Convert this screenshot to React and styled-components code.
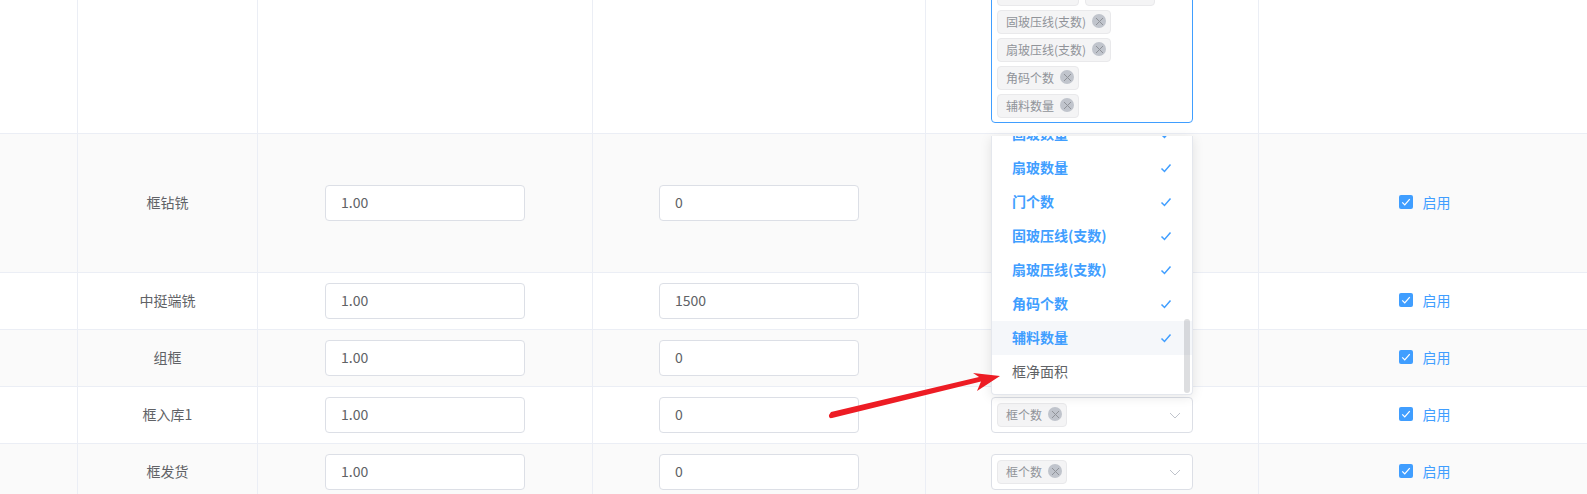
import styled, { createGlobalStyle } from "styled-components";

const GlobalStyle = createGlobalStyle`
  html, body {
    margin: 0;
    height: 100%;
    overflow: hidden;
    background: #fff;
  }
  body {
    font-family: "Noto Sans CJK SC", "Noto Sans", sans-serif;
    font-size: 14px;
    color: #606266;
  }
`;

const Page = styled.div`
  position: relative;
  width: 1587px;
  height: 494px;
  overflow: hidden;
`;

const Table = styled.div`
  margin-top: -63px;
`;

const Row = styled.div`
  display: grid;
  grid-template-columns: 78px 180px 335px 333px 333px 1fr;
  height: ${(p) => p.$height}px;
  box-sizing: border-box;
  border-bottom: 1px solid #ebeef5;
  background: ${(p) => (p.$striped ? "#fafafa" : "#fff")};
`;

const Cell = styled.div`
  display: flex;
  align-items: center;
  justify-content: center;
  min-width: 0;
  border-right: 1px solid #ebeef5;
  &:last-child {
    border-right: 0;
  }
`;

const CellText = styled.span`
  padding-bottom: 2px;
`;

const NumberInput = styled.input`
  width: 200px;
  height: 36px;
  box-sizing: border-box;
  padding: 0 15px 2px;
  border: 1px solid #dcdfe6;
  border-radius: 4px;
  outline: 0;
  background: #fff;
  font: inherit;
  color: #606266;
`;

const SelectBox = styled.div`
  display: flex;
  width: 202px;
  min-height: 36px;
  box-sizing: border-box;
  padding: ${(p) => (p.$open ? "6px 5px 4px" : "5px")};
  border: 1px solid ${(p) => (p.$open ? "#409eff" : "#dcdfe6")};
  border-radius: 4px;
  background: #fff;
`;

const Tags = styled.div`
  display: flex;
  flex-wrap: wrap;
  gap: 4px 6px;
  width: 160px;
`;

const Tag = styled.span`
  display: inline-flex;
  align-items: center;
  height: 24px;
  box-sizing: border-box;
  padding: 0 4px 2px 8px;
  border: 1px solid #e9e9eb;
  border-radius: 4px;
  background: #f4f4f5;
  font-size: 12px;
  color: #909399;
  white-space: nowrap;
`;

const TagClose = styled.span`
  display: inline-flex;
  align-items: center;
  justify-content: center;
  width: 14px;
  height: 14px;
  margin-left: 6px;
  border-radius: 50%;
  background: #c0c4cc;
  color: #909399;
`;

const Chevron = styled.span`
  display: flex;
  align-items: center;
  justify-content: center;
  align-self: flex-start;
  width: 24px;
  height: 24px;
  margin-left: 6px;
  color: #c0c4cc;
`;

const Status = styled.label`
  display: inline-flex;
  align-items: center;
  gap: 10px;
  margin-left: 3px;
  padding-bottom: 2px;
  color: #409eff;
`;

const CheckBox = styled.span`
  display: flex;
  align-items: center;
  justify-content: center;
  width: 14px;
  height: 14px;
  border-radius: 2px;
  background: #409eff;
  color: #fff;
`;

const Dropdown = styled.div`
  position: absolute;
  top: 136px;
  left: 991px;
  width: 202px;
  height: 259px;
  box-sizing: border-box;
  border: 1px solid #e4e7ed;
  border-top: 0;
  border-radius: 0 0 4px 4px;
  background: #fff;
  box-shadow: 0 2px 12px rgba(0, 0, 0, 0.1);
  &::before {
    content: "";
    position: absolute;
    top: -5px;
    left: 37px;
    border-style: solid;
    border-width: 0 5px 5px;
    border-color: transparent transparent #fff;
  }
`;

const OptionList = styled.div`
  height: 100%;
  overflow: hidden;
  position: relative;
`;

const Options = styled.ul`
  list-style: none;
  margin: -19px 0 0;
  padding: 0;
`;

const Option = styled.li`
  display: flex;
  align-items: center;
  justify-content: space-between;
  height: 34px;
  padding: 0 20px;
  font-weight: ${(p) => (p.$selected ? 700 : 400)};
  color: ${(p) => (p.$selected ? "#409eff" : "#606266")};
  background: ${(p) => (p.$hover ? "#f5f7fa" : "transparent")};
`;

const ScrollThumb = styled.div`
  position: absolute;
  top: 183px;
  right: 2px;
  width: 6px;
  height: 74px;
  border-radius: 3px;
  background: rgba(144, 147, 153, 0.3);
`;

const Arrow = styled.svg`
  position: absolute;
  top: 360px;
  left: 820px;
  pointer-events: none;
`;

const CloseIcon = () => (
  <svg width="9" height="9" viewBox="0 0 9 9" fill="none" stroke="currentColor" strokeWidth="1">
    <path d="M1 1l7 7M8 1L1 8" />
  </svg>
);

const CheckIcon = ({ size = 12, width = 1.5 }) => (
  <svg width={size} height={size} viewBox="0 0 12 12" fill="none" stroke="currentColor" strokeWidth={width}>
    <path d="M1.5 6.5l3 3 6-7" />
  </svg>
);

const ChevronIcon = () => (
  <svg width="12" height="7" viewBox="0 0 12 7" fill="none" stroke="currentColor" strokeWidth="1">
    <path d="M1 1l5 5 5-5" />
  </svg>
);

const allTags = ["框个数", "固玻数量", "扇玻数量", "门个数", "固玻压线(支数)", "扇玻压线(支数)", "角码个数", "辅料数量"];

// the selects of 框钻铣, 中挺端铣 and 组框 sit under the open dropdown
const rows = [
  { name: "", rate: "", price: "", height: 197, tags: allTags, open: true },
  { name: "框钻铣", rate: "1.00", price: "0", height: 139, striped: true, tags: [] },
  { name: "中挺端铣", rate: "1.00", price: "1500", height: 57, tags: [] },
  { name: "组框", rate: "1.00", price: "0", height: 57, striped: true, tags: [] },
  { name: "框入库1", rate: "1.00", price: "0", height: 57, tags: ["框个数"] },
  { name: "框发货", rate: "1.00", price: "0", height: 57, striped: true, tags: ["框个数"] },
];

const options = ["固玻数量", "扇玻数量", "门个数", "固玻压线(支数)", "扇玻压线(支数)", "角码个数", "辅料数量"];

function App() {
  return (
    <Page>
      <GlobalStyle />
      <Table>
        {rows.map((row, i) => (
          <Row key={i} $height={row.height} $striped={row.striped}>
            <Cell />
            <Cell>{row.name && <CellText>{row.name}</CellText>}</Cell>
            <Cell>{row.rate && <NumberInput readOnly value={row.rate} />}</Cell>
            <Cell>{row.price && <NumberInput readOnly value={row.price} />}</Cell>
            <Cell>
              <SelectBox $open={row.open}>
                <Tags>
                  {row.tags.map((tag) => (
                    <Tag key={tag}>
                      {tag}
                      <TagClose>
                        <CloseIcon />
                      </TagClose>
                    </Tag>
                  ))}
                </Tags>
                {!row.open && (
                  <Chevron>
                    <ChevronIcon />
                  </Chevron>
                )}
              </SelectBox>
            </Cell>
            <Cell>
              {row.name && (
                <Status>
                  <CheckBox>
                    <CheckIcon size={10} />
                  </CheckBox>
                  启用
                </Status>
              )}
            </Cell>
          </Row>
        ))}
      </Table>

      <Dropdown>
        <OptionList>
          <Options>
            {options.map((opt) => (
              <Option key={opt} $selected $hover={opt === "辅料数量"}>
                <CellText>{opt}</CellText>
                <CheckIcon />
              </Option>
            ))}
            <Option>
              <CellText>框净面积</CellText>
            </Option>
          </Options>
          <ScrollThumb />
        </OptionList>
      </Dropdown>

      <Arrow width="190" height="70" viewBox="0 0 190 70">
        <path
          d="M9 55 C8.5 57.5 10 58.5 12 58 L161 21.5 L157 31 L180 16 L153 13 L159 17 L11 52 Z"
          fill="#ed1c24"
        />
      </Arrow>
    </Page>
  );
}

export default App;
